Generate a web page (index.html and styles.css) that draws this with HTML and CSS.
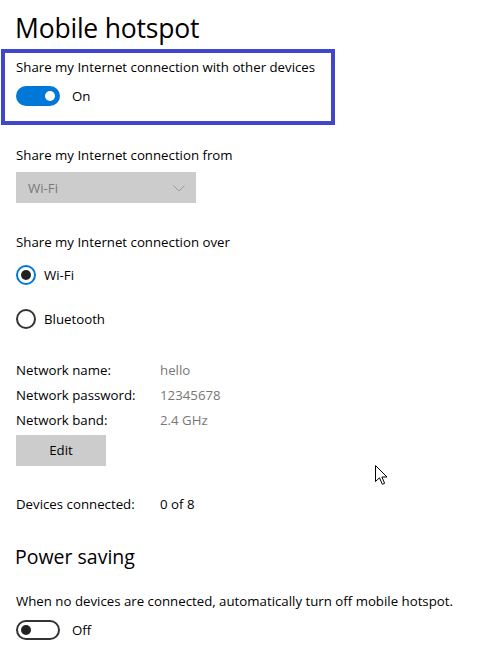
FILE: index.html
```html
<!DOCTYPE html>
<html>
<head>
<meta charset="utf-8">
<link rel="stylesheet" href="styles.css">
</head>
<body>
<div class="page">
  <h1 class="title">Mobile hotspot</h1>
  <div class="highlight">
    <div class="label">Share my Internet connection with other devices</div>
    <div class="toggle-row">
      <span class="toggle on"><span class="thumb"></span></span>
      <span class="toggle-text">On</span>
    </div>
  </div>

  <div class="label gap-from">Share my Internet connection from</div>
  <div class="dropdown">
    <span class="dd-text">Wi-Fi</span>
    <svg class="chev" width="12" height="7" viewBox="0 0 12 7"><path d="M0.5 0.5 L6 6 L11.5 0.5" fill="none" stroke="#9a9a9a" stroke-width="1"/></svg>
  </div>

  <div class="label gap-over">Share my Internet connection over</div>
  <div class="radio-row first">
    <span class="radio checked"><span class="dot"></span></span>
    <span class="radio-text">Wi-Fi</span>
  </div>
  <div class="radio-row second">
    <span class="radio"></span>
    <span class="radio-text">Bluetooth</span>
  </div>

  <div class="info">
    <div class="info-row"><span class="key">Network name:</span><span class="val">hello</span></div>
    <div class="info-row"><span class="key">Network password:</span><span class="val">12345678</span></div>
    <div class="info-row"><span class="key">Network band:</span><span class="val">2.4 GHz</span></div>
  </div>
  <div class="btn">Edit</div>

  <div class="info-row devices"><span class="key">Devices connected:</span><span class="val dark">0 of 8</span></div>

  <h2 class="subtitle">Power saving</h2>
  <div class="label gap-power">When no devices are connected, automatically turn off mobile hotspot.</div>
  <div class="toggle-row off-row">
    <span class="toggle off"><span class="thumb"></span></span>
    <span class="toggle-text">Off</span>
  </div>

  <svg class="cursor" width="13" height="21" viewBox="0 0 13 21">
    <path d="M0.5 0.5 L0.5 16.5 L4.5 12.8 L7.3 19.3 L9.6 18.3 L6.9 12 L12 12 Z" fill="#fff" stroke="#000" stroke-width="1" stroke-linejoin="miter"/>
  </svg>
</div>
</body>
</html>
```
FILE: styles.css
```css
html, body {
  margin: 0;
  padding: 0;
  background: #ffffff;
}
.page {
  position: relative;
  width: 486px;
  height: 665px;
  overflow: hidden;
  font-family: "Open Sans", "Noto Sans", sans-serif;
  font-size: 13.25px;
  color: #000;
}
.title {
  margin: 0;
  padding: 10px 0 0 15px;
  font-weight: 400;
  font-size: 26.5px;
  line-height: 36px;
  height: 36px;
  letter-spacing: -0.2px;
}
.highlight {
  margin: 3px 0 0 1px;
  width: 315px;
  border: 4px solid #3f48cc;
  padding: 4px 0 15px 11px;
}
.label {
  line-height: 20px;
  height: 20px;
  white-space: nowrap;
}
.toggle-row {
  margin-top: 9px;
  display: flex;
  align-items: center;
  height: 20px;
  gap: 12px;
}
.toggle {
  box-sizing: border-box;
  width: 44px;
  height: 20px;
  border-radius: 10px;
  display: flex;
  align-items: center;
}
.toggle.on {
  background: #0078d7;
  justify-content: flex-end;
  padding-right: 5px;
}
.toggle.off {
  border: 2px solid #333333;
  padding-left: 3px;
}
.thumb {
  width: 10px;
  height: 10px;
  border-radius: 50%;
}
.toggle.on .thumb { background: #ffffff; }
.toggle.off .thumb { background: #222222; }
.toggle-text { line-height: 20px; }

.gap-from { margin: 20px 0 0 16px; }
.dropdown {
  margin: 7px 0 0 16px;
  width: 180px;
  height: 31px;
  box-sizing: border-box;
  background: #cccccc;
  display: flex;
  align-items: center;
  justify-content: space-between;
  padding: 0 11px 0 12px;
}
.dd-text { color: #7a7a7a; }
.chev { margin-top: 1px; }

.gap-over { margin: 29px 0 0 16px; }
.radio-row {
  margin-left: 16px;
  display: flex;
  align-items: center;
  gap: 8px;
  height: 20px;
}
.radio-row.first { margin-top: 13px; }
.radio-row.second { margin-top: 24px; }
.radio {
  box-sizing: border-box;
  width: 20px;
  height: 20px;
  border-radius: 50%;
  border: 2px solid #333333;
  display: flex;
  align-items: center;
  justify-content: center;
}
.radio.checked { border-color: #0078d7; }
.radio .dot {
  width: 10px;
  height: 10px;
  border-radius: 50%;
  background: #222222;
}

.info { margin: 29px 0 0 16px; }
.info-row {
  display: flex;
  height: 25px;
  line-height: 25px;
  white-space: nowrap;
}
.key { width: 144px; }
.val { color: #777777; }
.val.dark { color: #000; }
.btn {
  margin: 2px 0 0 16px;
  width: 90px;
  height: 31px;
  line-height: 31px;
  background: #cccccc;
  text-align: center;
}
.devices { margin: 26px 0 0 16px; }

.subtitle {
  margin: 26px 0 0 15px;
  font-weight: 400;
  font-size: 19.5px;
  line-height: 28px;
  height: 28px;
}
.gap-power { margin: 20px 0 0 16px; }
.off-row { margin-left: 16px; }

.cursor {
  position: absolute;
  left: 375px;
  top: 465px;
}
```
